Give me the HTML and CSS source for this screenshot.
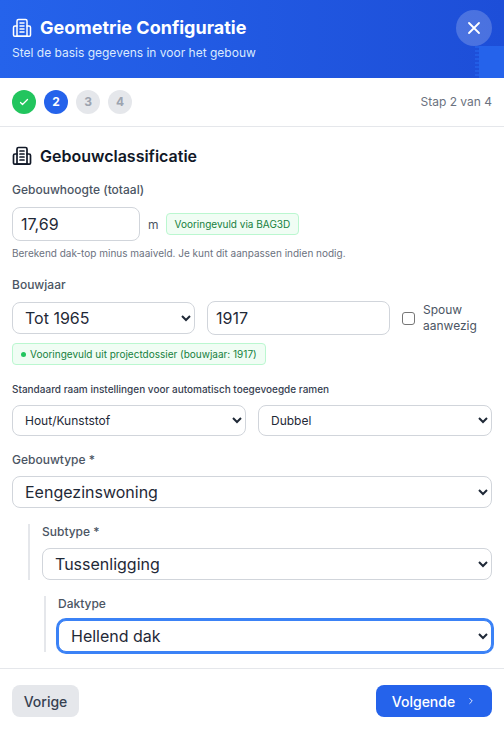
FILE: index.html
```html
<!DOCTYPE html>
<html lang="nl">
<head>
<meta charset="utf-8">
<title>Geometrie Configuratie</title>
<link rel="stylesheet" href="styles.css">
</head>
<body>
<div class="modal">
  <header class="head">
    <div class="head-deco"></div>
    <div class="head-text">
      <h1 class="head-title">
        <svg class="bld" viewBox="0 0 20 20" fill="none" stroke="currentColor" stroke-width="1.5" stroke-linecap="round" stroke-linejoin="round"><path d="M5 18V3a1.5 1.5 0 0 1 1.5-1.5h7A1.500 1.500 0 0 1 15 3v15"/><path d="M5 8H3a1.500 1.500 0 0 0-1.500 1.500V17A1.200 1.200 0 0 0 2.700 18.200h14.600A1.200 1.200 0 0 0 18.500 17V9.500A1.500 1.500 0 0 0 17 8h-2"/><path d="M8 5h4M8 8h4M8 11h4M8 14h4M5 18.200h10"/></svg>
        Geometrie Configuratie
      </h1>
      <p class="head-sub">Stel de basis gegevens in voor het gebouw</p>
    </div>
    <button class="close" aria-label="Sluiten">
      <svg viewBox="0 0 24 24" width="20" height="20" fill="none" stroke="#fff" stroke-width="2.200" stroke-linecap="round"><path d="M6 6l12 12M18 6L6 18"/></svg>
    </button>
  </header>

  <div class="steps">
    <div class="step-list">
      <span class="step done"><svg viewBox="0 0 24 24" width="12" height="12" fill="none" stroke="#fff" stroke-width="2.500" stroke-linecap="round" stroke-linejoin="round"><path d="M5 13l4 4L19 7"/></svg></span>
      <span class="step active">2</span>
      <span class="step todo">3</span>
      <span class="step todo">4</span>
    </div>
    <span class="step-label">Stap 2 van 4</span>
  </div>

  <main class="body">
    <h2 class="sec-title">
      <svg class="bld" viewBox="0 0 20 20" fill="none" stroke="currentColor" stroke-width="1.700" stroke-linecap="round" stroke-linejoin="round"><path d="M5 18V3a1.5 1.5 0 0 1 1.500-1.500h7A1.500 1.500 0 0 1 15 3v15"/><path d="M5 8H3a1.500 1.500 0 0 0-1.500 1.500V17A1.200 1.200 0 0 0 2.700 18.200h14.600A1.200 1.200 0 0 0 18.500 17V9.500A1.500 1.500 0 0 0 17 8h-2"/><path d="M8 5h4M8 8h4M8 11h4M8 14h4M5 18.200h10"/></svg>
      Gebouwclassificatie
    </h2>

    <label class="lbl lbl-height">Gebouwhoogte (totaal)</label>
    <div class="row-height">
      <input class="ctl input-height" type="text" value="17,69">
      <span class="unit">m</span>
      <span class="pill">Vooringevuld via BAG3D</span>
    </div>
    <p class="help">Berekend dak-top minus maaiveld. Je kunt dit aanpassen indien nodig.</p>

    <label class="lbl lbl-year">Bouwjaar</label>
    <div class="row-year">
      <select class="ctl sel sel-period"><option>Tot 1965</option></select>
      <input class="ctl input-year" type="text" value="1917">
      <label class="check"><input type="checkbox"><span>Spouw aanwezig</span></label>
    </div>
    <div class="note"><span class="dot"></span>Vooringevuld uit projectdossier (bouwjaar: 1917)</div>

    <p class="lbl-small">Standaard raam instellingen voor automatisch toegevoegde ramen</p>
    <div class="row-win">
      <select class="ctl sel sel-small"><option>Hout/Kunststof</option></select>
      <select class="ctl sel sel-small"><option>Dubbel</option></select>
    </div>

    <label class="lbl lbl-type">Gebouwtype *</label>
    <select class="ctl sel sel-full"><option>Eengezinswoning</option></select>

    <div class="nest nest-sub">
      <label class="lbl lbl-nest">Subtype *</label>
      <select class="ctl sel sel-full"><option>Tussenligging</option></select>
    </div>
    <div class="nest nest-roof">
      <label class="lbl lbl-nest">Daktype</label>
      <select class="ctl sel sel-full sel-focus"><option>Hellend dak</option></select>
    </div>
  </main>

  <footer class="foot">
    <button class="btn btn-prev">Vorige</button>
    <button class="btn btn-next">Volgende
      <svg viewBox="0 0 24 24" width="10" height="10" fill="none" stroke="#fff" stroke-width="2" stroke-linecap="round" stroke-linejoin="round"><path d="M9 6l6 6-6 6"/></svg>
    </button>
  </footer>
</div>
</body>
</html>
```
FILE: styles.css
```css
* { box-sizing: border-box; }
html, body { margin: 0; padding: 0; background: #fff; }
body { font-family: Inter, "Liberation Sans", sans-serif; color: #111827; }
.modal { width: 504px; height: 730px; display: flex; flex-direction: column; overflow: hidden; background: #fff; }

.head { position: relative; height: 78px; flex: none; display: flex; justify-content: space-between; padding: 10px 12px 0; background: linear-gradient(90deg, #2563eb, #1d4ed8); color: #fff; }
.head-deco { position: absolute; right: 0; bottom: 0; width: 25px; height: 32px; background: #2563eb; }
.head-deco::before { content: ""; position: absolute; left: -4px; top: 0; bottom: 0; width: 4px; background: repeating-linear-gradient(180deg, rgba(37,99,235,.7) 0 2px, transparent 2px 4px); }
.head-text { position: relative; padding-top: 7px; }
.head-title { margin: 0; display: flex; align-items: center; gap: 8px; font-size: 18px; line-height: 22px; font-weight: 700; }
.bld { width: 20px; height: 20px; flex: none; }
.head-sub { margin: 6px 0 0; font-size: 12px; line-height: 16px; color: #dbeafe; }
.close { position: relative; width: 36px; height: 36px; border: 0; padding: 0; border-radius: 50%; background: rgba(255,255,255,.2); display: flex; align-items: center; justify-content: center; }

.steps { height: 49px; flex: none; display: flex; align-items: center; justify-content: space-between; padding: 0 12px 1px; border-bottom: 1px solid #e5e7eb; }
.step-list { display: flex; gap: 8px; }
.step { width: 24px; height: 24px; border-radius: 50%; display: flex; align-items: center; justify-content: center; font-size: 12px; font-weight: 700; }
.done { background: #22c55e; }
.active { background: #2563eb; color: #fff; }
.todo { background: #e5e7eb; color: #9ca3af; }
.step-label { font-size: 12px; color: #6b7280; }

.body { flex: 1; padding: 19px 12px 0; }
.sec-title { margin: 0; display: flex; align-items: center; gap: 8px; height: 20px; font-size: 16px; font-weight: 600; color: #111827; }
.lbl { display: block; font-size: 12px; line-height: 16px; font-weight: 500; color: #4b5563; }
.lbl-height { margin-top: 16px; }
.ctl { font-family: Inter, "Liberation Sans", sans-serif; color: #1f2937; background: #fff; border: 1px solid #d1d5db; border-radius: 8px; outline: 0; }
.row-height { margin-top: 9px; display: flex; align-items: center; }
.input-height { width: 128px; height: 34px; padding: 0 8px; font-size: 16px; }
.unit { margin-left: 8px; font-size: 12px; color: #4b5563; }
.pill { margin-left: 7px; height: 22px; padding: 0 8px; display: flex; align-items: center; font-size: 10px; font-weight: 400; color: #15803d; background: #f0fdf4; border: 1px solid #bbf7d0; border-radius: 4px; }
.help { margin: 6px 0 0; font-size: 10px; line-height: 12px; color: #6b7280; }

.lbl-year { margin-top: 18px; }
.row-year { margin-top: 8px; display: flex; align-items: center; gap: 12px; height: 34px; }
.sel { padding: 0 8px; }
.sel-period { flex: none; width: 183px; height: 32px; font-size: 16px; }
.input-year { flex: none; width: 183px; height: 34px; padding: 0 8px; font-size: 16px; }
.check { display: flex; align-items: center; gap: 8px; font-size: 12px; line-height: 16px; color: #4b5563; }
.check input { margin: 0; width: 13px; height: 13px; flex: none; appearance: none; background: #fff; border: 1px solid #767676; border-radius: 3px; }
.note { margin-top: 8px; width: 254px; height: 22px; display: flex; align-items: center; gap: 4px; padding: 0 8px; font-size: 10px; font-weight: 400; color: #15803d; background: #f0fdf4; border: 1px solid #bbf7d0; border-radius: 4px; white-space: nowrap; }
.dot { width: 5px; height: 5px; border-radius: 50%; background: #22c55e; flex: none; }

.lbl-small { margin: 18px 0 0; font-size: 10px; line-height: 12px; font-weight: 500; color: #374151; }
.row-win { margin-top: 10px; display: flex; gap: 12px; }
.sel-small { flex: 1; width: 234px; height: 31px; font-size: 12px; }

.lbl-type { margin-top: 16px; }
.sel-full { display: block; width: 100%; height: 32px; font-size: 16px; margin-top: 8px; }

.nest { border-left: 2px solid #e5e7eb; }
.nest-sub { margin: 16px 0 0 16px; padding-left: 12px; height: 56px; }
.nest-roof { margin: 16px 0 0 32px; padding-left: 12px; height: 56px; }
.nest .sel-full { margin-top: 8px; }
.sel-focus { border-color: #3b82f6; box-shadow: 0 0 0 2px #3b82f6; }

.foot { flex: none; height: 62px; display: flex; justify-content: space-between; padding: 16px 12px 0; border-top: 1px solid #e5e7eb; }
.btn { height: 32px; border: 0; border-radius: 8px; font-family: Inter, "Liberation Sans", sans-serif; font-size: 14px; font-weight: 500; display: flex; align-items: center; justify-content: center; }
.btn-prev { width: 67px; background: #e5e7eb; color: #374151; }
.btn-next { width: 116px; gap: 11px; background: #2563eb; color: #fff; font-weight: 500; }
```
